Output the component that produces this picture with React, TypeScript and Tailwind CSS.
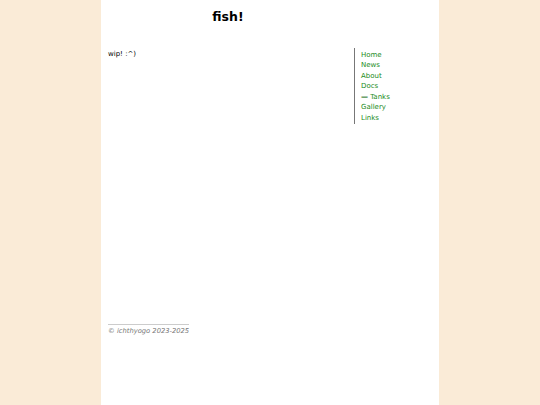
export default function App() {
  const links = ["Home", "News", "About", "Docs", "Tanks", "Gallery", "Links"];
  return (
    <div className="min-h-screen bg-[#faebd7]" style={{ fontFamily: '"DejaVu Sans", sans-serif' }}>
      <div className="mx-auto flex min-h-screen w-[338px] flex-col bg-white">
        <div className="flex">
          <div className="flex w-[253px] flex-col pl-[7px]">
            <h1 className="pr-[6px] pt-[7px] text-center text-[12.5px] font-bold leading-[20px] text-black">fish!</h1>
            <p className="mt-[22px] text-[7px] leading-[10.5px] text-black">wip! :^)</p>
          </div>
          <nav className="mt-[48px] flex flex-col border-l border-[#777] pl-[6px] pt-[1.5px] text-[7px] leading-[10.6px]">
            {links.map((l) => (
              <a key={l} className="text-[#228b22]">
                {l === "Tanks" ? (
                  <span>
                    <span className="font-bold text-[#006400]">—</span> {l}
                  </span>
                ) : (
                  l
                )}
              </a>
            ))}
          </nav>
        </div>
        <footer className="mt-[192px] pl-[7px]">
          <div className="inline-block border-t border-[#ccc] pt-[0.5px] text-[6.75px] italic leading-[10px] text-[#777]">
            © ichthyogo 2023-2025
          </div>
        </footer>
      </div>
    </div>
  );
}
